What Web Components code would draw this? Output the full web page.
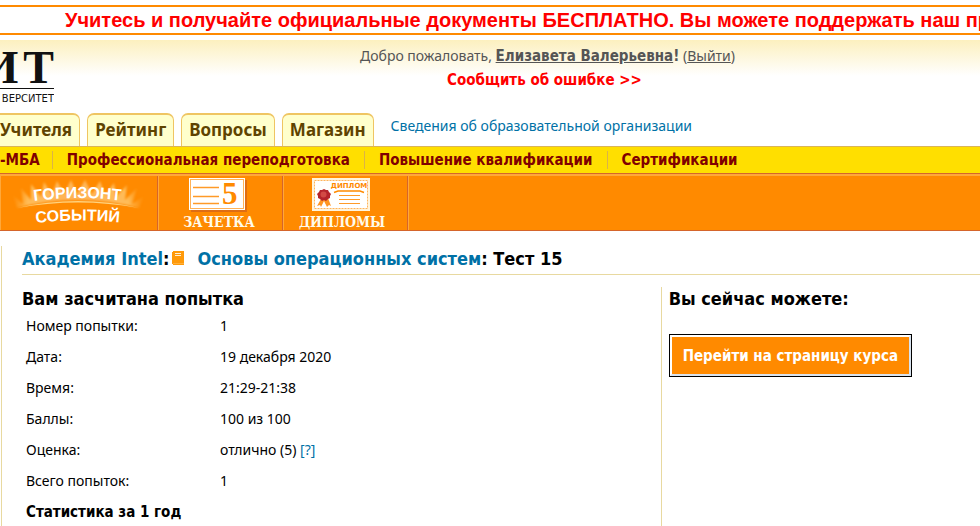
<!DOCTYPE html>
<html lang="ru">
<head>
<meta charset="utf-8">
<title>Основы операционных систем: Тест 15</title>
<style>
  :root {
    --text: "Noto Sans", Tahoma, sans-serif;
    --strong: "DejaVu Sans Condensed", Tahoma, sans-serif;
    --orange: #ff8a00;
    --link: #0071a6;
    --rule: #e8d9a0;
  }
  body { margin: 0; background: #fff; color: #000; font: 14px/24px var(--text); overflow: hidden; }
</style>
</head>
<body>
<intuit-page></intuit-page>
<script>
const define = (name, css, html) => {
  const template = document.createElement('template');
  template.innerHTML = `<style>a{color:inherit;text-decoration:none}${css}</style>${html}`;
  customElements.define(name, class extends HTMLElement {
    constructor() {
      super();
      this.attachShadow({ mode: 'open' }).append(template.content.cloneNode(true));
    }
  });
};

define('promo-banner', `
  :host { display: block; margin-top: 5px; border: solid var(--orange); border-width: 2px 0; padding-left: 65px;
    font: bold 20px/26px "Liberation Sans", Arial, sans-serif; color: #f00; white-space: nowrap; overflow: hidden; }
`, `<slot></slot>`);

define('site-logo', `
  :host { display: block; width: 54px; overflow: hidden; color: #111; }
  .mark { display: flex; justify-content: flex-end; gap: 5px; font: bold 46px/32px "Liberation Serif", serif; border-bottom: 1px solid #111; padding-bottom: 4px; }
  .name { display: flex; justify-content: flex-end; font: 10px/20px "DejaVu Sans", sans-serif; }
`, `<div class="mark"><span>И</span><span>Т</span></div><div class="name">ВЕРСИТЕТ</div>`);

define('user-greeting', `
  :host { display: block; color: #555; font: 14px/23px var(--text); white-space: nowrap; }
  b { font: bold 15px/23px var(--strong); }
  a.out { text-decoration: underline; }
  .report { text-align: center; padding-right: 6px; }
  .report a { font: bold 15px/23px var(--strong); color: #f00; }
`, `<div>Добро пожаловать, <b><a class="out" href="#"><slot></slot></a>!</b> (<a class="out" href="#">Выйти</a>)</div>
   <div class="report"><a href="#">Сообщить об ошибке &gt;&gt;</a></div>`);

define('site-header', `
  :host { display: flex; margin-top: 5px; height: 73px; background: linear-gradient(#fcf0bf, #fff 36px); }
  site-logo { margin-top: 12px; }
  user-greeting { margin: 4px 0 0 306px; }
`, `<site-logo></site-logo><user-greeting>Елизавета Валерьевна</user-greeting>`);

define('nav-tab', `
  :host { display: block; box-sizing: border-box; height: 33px; padding: 0 7px; border: solid #efc562; border-width: 2px 1px 0;
    border-radius: 7px 7px 0 0; background: #ffffcc; color: #5f4300; font: bold 17px/30px var(--text); }
  :host([flush]) { padding-left: 0; border-left: 0; border-top-left-radius: 0; }
`, `<a href="#"><slot></slot></a>`);

define('tab-bar', `
  nav { display: flex; gap: 7px; white-space: nowrap; }
  :host { display: block; }
  .info { margin-left: 10px; color: var(--link); line-height: 25px; }
`, `<nav><nav-tab flush>Учителя</nav-tab><nav-tab>Рейтинг</nav-tab><nav-tab>Вопросы</nav-tab><nav-tab>Магазин</nav-tab>
   <a class="info" href="#">Сведения об образовательной организации</a></nav>`);

define('program-bar', `
  :host { display: block; background: #ffdf00; border: solid #d9b45a; border-width: 1px 0 0; border-bottom: 1px solid #d5652b; }
  nav { display: flex; align-items: center; height: 26px; white-space: nowrap; font: bold 15px/18px var(--strong); color: #800000; }
  a { padding: 0 14px; border-left: 1px solid #dbb347; }
  a:first-child { padding: 0 12px 0 0; border: 0; }
`, `<nav><a href="#">-МБА</a><a href="#">Профессиональная переподготовка</a><a href="#">Повышение квалификации</a><a href="#">Сертификации</a></nav>`);

define('feature-bar', `
  :host { display: block; background: var(--orange); border-bottom: 1px solid #d5652b; }
  nav { display: flex; height: 56px; box-sizing: border-box; border-top: 2px solid #ffa83a; }
  a { display: block; box-sizing: border-box; width: 125px; border-left: 1px solid #ffa83a; border-right: 1px solid #d5652b; }
  a.wide { width: 158px; }
  span { flex: 1; border-left: 1px solid #ffa83a; }
  svg { display: block; width: 100%; height: 54px; overflow: hidden; }
  .sans { font: bold 16px "Liberation Sans", sans-serif; fill: #fff; }
  .serif { font: bold 14px "DejaVu Serif Condensed", "DejaVu Serif", serif; fill: #fffbea; }
  .grade { font: bold 31px "Liberation Serif", serif; fill: #ff8a00; }
  .diploma { font: bold 7px "DejaVu Sans", sans-serif; fill: #ff8a00; }
`, `<nav>
  <a class="wide" href="#"><svg viewBox="0 0 156 54">
    <defs>
      <radialGradient id="glow" gradientUnits="userSpaceOnUse" cx="77" cy="30" r="68"><stop offset="0" stop-color="#fff" stop-opacity=".3"/><stop offset=".75" stop-color="#ffe6a0" stop-opacity=".55"/><stop offset="1" stop-color="#ffb040" stop-opacity="0"/></radialGradient>
      <filter id="soft"><feGaussianBlur stdDeviation="1.3"/></filter>
      <path id="up" d="M33 25 Q78 19 124 25"/><path id="down" d="M35 47 Q78 42 124 47"/>
    </defs>
    <g transform="translate(0 4)">
      <path filter="url(#soft)" fill="url(#glow)" d="M16 28 L12 15 L22 24 L20 8 L30 20 L30 4 L40 17 L43 2 L51 15 L56 1 L63 14 L70 0 L76 14 L84 0 L91 14 L99 1 L104 15 L113 3 L115 17 L126 5 L124 20 L136 8 L131 24 L143 16 L138 28 Q77 12 16 28Z"/>
      <path d="M16 28 Q77 14 138 28 Q77 17 16 28Z" fill="#fff0b0" opacity=".7"/>
    </g>
    <text class="sans"><textPath href="#up">ГОРИЗОНТ</textPath></text>
    <text class="sans"><textPath href="#down">СОБЫТИЙ</textPath></text>
  </svg></a>
  <a href="#"><svg viewBox="0 0 123 54">
    <rect x="32" y="4" width="56" height="32" fill="#c85a20" opacity=".6"/>
    <rect x="30" y="2" width="56" height="32" fill="#fff"/><rect x="31.500" y="3.500" width="53" height="29" fill="none" stroke="#ffb257"/>
    <path d="M34 11.500h26M34 20.500h26M34 27.500h26" stroke="#ff9a28" stroke-width="1.500"/>
    <text class="grade" x="63" y="28">5</text>
    <text class="serif" x="60" y="51" text-anchor="middle">ЗАЧЕТКА</text>
  </svg></a>
  <a href="#"><svg viewBox="0 0 123 54">
    <rect x="28" y="2" width="58" height="33" fill="#fff4dc"/><rect x="30.500" y="4.500" width="53" height="28" fill="#fff" stroke="#ffb45c" stroke-dasharray="2 1"/>
    <path d="M37 23l-4 7 3-1 1 2 3-6 3 6 2-2 2 1-3-8z" fill="#ff9420"/>
    <path d="M40 13l2 1 2 0 1 2 2 2-1 2 0 2-2 1-2 2-2-1-2 1-2-2-2-1 0-2-1-2 2-2 1-2 2 0z" fill="#b5242b"/><circle cx="39.500" cy="18.500" r="3" fill="#d24a45"/>
    <text class="diploma" x="65" y="12" text-anchor="middle">ДИПЛОМ</text>
    <path d="M50 16.500l4-1.500h22l4 1.500" fill="none" stroke="#ff8a00" stroke-width="1.500"/>
    <path d="M55 19.500h21M55 23.500h21M55 27.500h21" stroke="#ff9a28"/>
    <text class="serif" x="58" y="51" text-anchor="middle">ДИПЛОМЫ</text>
  </svg></a>
  <span></span></nav>`);

define('course-title', `
  :host { display: block; border-bottom: 1px solid var(--rule); padding-bottom: 2px; }
  h1 { display: flex; align-items: center; margin: 0; font: bold 18px/26px var(--strong); white-space: nowrap; }
  a { color: var(--link); }
  svg { width: 12px; height: 14px; margin: 0 13px 2px 3px; }
`, `<h1><a href="#">Академия Intel</a>:<svg viewBox="0 0 12 14" shape-rendering="crispEdges"><path d="M1 0h11v14H1v-1H0V1h1z" fill="#ff9a0a"/><path d="M3 2h6v1H3zM3 4h6v1H3z" fill="#fff0d4"/><path d="M1 12h11v1H1z" fill="#ffb03c"/></svg><a href="#">Основы операционных систем</a>:&nbsp;Тест 15</h1>`);

define('attempt-summary', `
  :host { display: block; }
  h2 { margin: 0; font: bold 18px/23px var(--strong); }
  table { border-collapse: collapse; }
  th, td { height: 31px; padding: 0 4px; text-align: left; font-weight: normal; line-height: 20px; }
  tr > :first-child { width: 186px; }
  td a { color: var(--link); }
  .total { font: bold 15px/20px var(--strong); }
`, `<h2>Вам засчитана попытка</h2>
  <table>
    <tr><th scope="row">Номер попытки:</th><td>1</td></tr>
    <tr><th scope="row">Дата:</th><td>19 декабря 2020</td></tr>
    <tr><th scope="row">Время:</th><td>21:29-21:38</td></tr>
    <tr><th scope="row">Баллы:</th><td>100 из 100</td></tr>
    <tr><th scope="row">Оценка:</th><td>отлично (5) <a href="#">[?]</a></td></tr>
    <tr><th scope="row">Всего попыток:</th><td>1</td></tr>
    <tr><th scope="row" class="total">Статистика за 1 год</th><td></td></tr>
  </table>`);

define('next-steps', `
  :host { display: block; border-left: 1px solid var(--rule); padding-left: 7px; }
  h2 { margin: 0 0 25px; font: bold 18px/23px var(--strong); }
  button { margin: 0 1px; padding: 10px 11px 8px; border: 2px solid; border-color: #fff #d8e2ee #d8e2ee #fff; outline: 1px solid #000;
    background: var(--orange); background-clip: padding-box; color: #fff; font: bold 15px/19px var(--strong); white-space: nowrap; }
`, `<h2>Вы сейчас можете:</h2><button type="button">Перейти на страницу курса</button>`);

define('intuit-page', `
  :host { display: flex; flex-direction: column; min-height: 100vh; }
  promo-banner, site-header, tab-bar, program-bar, feature-bar { flex: none; }
  main { flex: 1; display: flex; flex-direction: column; margin: 15px 0 0 1px; border-left: 1px solid var(--rule); padding-left: 20px; }
  .columns { flex: 1; display: grid; grid-template-columns: 2fr 1fr; margin-top: 12px; }
`, `<promo-banner>Учитесь и получайте официальные документы БЕСПЛАТНО. Вы можете поддержать наш проект</promo-banner>
  <site-header></site-header><tab-bar></tab-bar><program-bar></program-bar><feature-bar></feature-bar>
  <main><course-title></course-title>
    <div class="columns"><attempt-summary></attempt-summary><next-steps></next-steps></div>
  </main>`);
</script>
</body>
</html>
